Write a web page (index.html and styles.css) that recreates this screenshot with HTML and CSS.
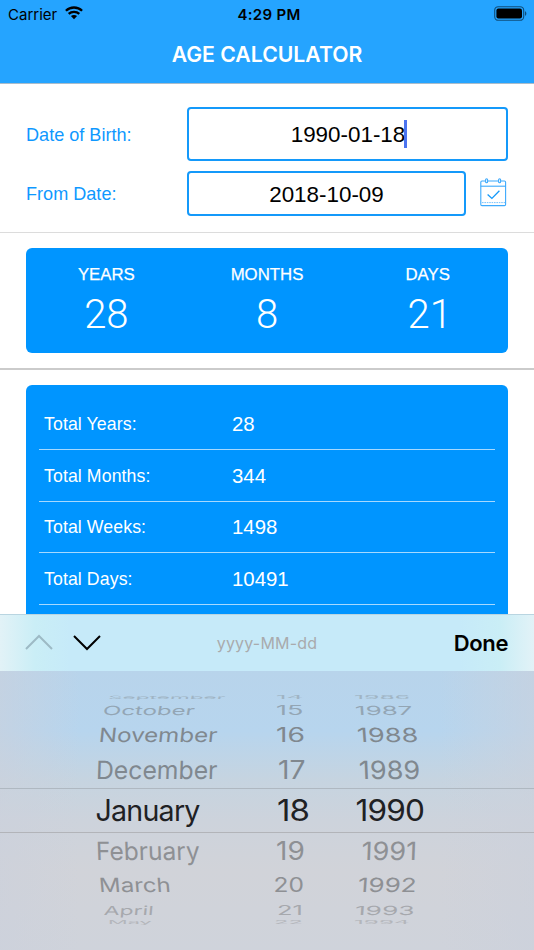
FILE: index.html
```html
<!DOCTYPE html>
<html lang="en">
<head>
    <meta charset="UTF-8">
    <meta name="viewport" content="width=device-width, initial-scale=1.0">
    <title>Age Calculator</title>
    <link rel="stylesheet" href="styles.css">
</head>
<body>
    <header class="header">
        <div class="status-bar">
            <div class="carrier">
                <span>Carrier</span>
                <svg width="18" height="14" viewBox="0 0 18 14" fill="none" stroke="#000" stroke-width="2.3">
                    <path d="M0.9 4.8C5.4 0.4 12.6 0.4 17.1 4.8"/>
                    <path d="M3.7 7.9C6.6 5.1 11.4 5.1 14.3 7.9"/>
                    <path d="M9 13.2L5.9 10.1C7.6 8.5 10.4 8.5 12.1 10.1Z" fill="#000" stroke="none"/>
                </svg>
            </div>
            <span class="time">4:29 PM</span>
            <svg class="battery" width="34" height="16" viewBox="0 0 34 16">
                <rect x="0.7" y="0.7" width="29" height="13.6" rx="3.6" fill="none" stroke="#0f4e7c" stroke-width="1.1"/>
                <rect x="2.4" y="2.4" width="25.6" height="10.2" rx="2" fill="#000"/>
                <path d="M31 5.2C32.8 5.8 32.8 9.2 31 9.8Z" fill="#0f4e7c"/>
            </svg>
        </div>
        <h1>AGE CALCULATOR</h1>
    </header>

    <form class="date-form">
        <div class="field">
            <label>Date of Birth:</label>
            <div class="date-input tall">1990-01-18<span class="caret"></span></div>
        </div>
        <div class="field">
            <label>From Date:</label>
            <div class="date-input">2018-10-09</div>
            <svg class="calendar" width="27" height="29" viewBox="0 0 27 29" fill="none" stroke="#3daafd" stroke-width="1.1">
                <rect x="0.8" y="3" width="24.8" height="24.6" rx="1.2"/>
                <path d="M0.8 8.2H25.6"/>
                <path d="M2 24.6H25" stroke-dasharray="1.6 0.8" stroke-width="0.7"/>
                <rect x="5.6" y="0.8" width="2" height="4" rx="1" fill="#fff"/>
                <rect x="18.6" y="0.8" width="2" height="4" rx="1" fill="#fff"/>
                <path d="M7.6 16.4L11.9 20.4L19.4 12.8" stroke="#1499fa" stroke-width="1.3"/>
            </svg>
        </div>
    </form>

    <section class="summary">
        <div class="card age">
            <div class="age-item"><h2>YEARS</h2><p>28</p></div>
            <div class="age-item"><h2>MONTHS</h2><p>8</p></div>
            <div class="age-item"><h2>DAYS</h2><p>21</p></div>
        </div>
    </section>

    <section class="totals">
        <div class="card totals-card">
            <div class="total"><span>Total Years:</span><b>28</b></div>
            <div class="total"><span>Total Months:</span><b>344</b></div>
            <div class="total"><span>Total Weeks:</span><b>1498</b></div>
            <div class="total"><span>Total Days:</span><b>10491</b></div>
        </div>
    </section>

    <div class="keyboard">
        <div class="toolbar">
            <div class="arrows">
                <svg width="28" height="17" viewBox="0 0 28 17" fill="none" stroke="#9dbac5" stroke-width="2"><path d="M1 15L14 2L27 15"/></svg>
                <svg width="28" height="17" viewBox="0 0 28 17" fill="none" stroke="#000" stroke-width="2"><path d="M1 2L14 15L27 2"/></svg>
            </div>
            <span class="placeholder">yyyy-MM-dd</span>
            <span class="done">Done</span>
        </div>
        <div class="picker">
            <div class="row up4"><span>September</span><span>14</span><span>1986</span></div>
            <div class="row up3"><span>October</span><span>15</span><span>1987</span></div>
            <div class="row up2"><span>November</span><span>16</span><span>1988</span></div>
            <div class="row up1"><span>December</span><span>17</span><span>1989</span></div>
            <div class="row selected"><span>January</span><span>18</span><span>1990</span></div>
            <div class="row down1"><span>February</span><span>19</span><span>1991</span></div>
            <div class="row down2"><span>March</span><span>20</span><span>1992</span></div>
            <div class="row down3"><span>April</span><span>21</span><span>1993</span></div>
            <div class="row down4"><span>May</span><span>22</span><span>1994</span></div>
        </div>
    </div>
</body>
</html>
```
FILE: styles.css
```css
* {
    box-sizing: border-box;
}

body {
    margin: 0;
    height: 950px;
    overflow: hidden;
    display: flex;
    flex-direction: column;
    background-color: #fff;
    font-family: "Liberation Sans", Arial, sans-serif;
}

h1, h2, p {
    margin: 0;
}

svg {
    display: block;
}

.header {
    height: 84px;
    flex: none;
    background-color: #25a4ff;
    border-bottom: 1px solid #a9bccb;
    font-family: Inter, sans-serif;
}

.status-bar {
    height: 28px;
    padding: 0 7px 0 8px;
    display: grid;
    grid-template-columns: 1fr auto 1fr;
    align-items: center;
    font-size: 15px;
}

.carrier {
    display: flex;
    align-items: center;
    gap: 8px;
}

.carrier svg {
    margin-top: -2px;
}

.time {
    padding-left: 3px;
    font-weight: 600;
    letter-spacing: 0.3px;
}

.battery {
    justify-self: end;
    margin-right: -1px;
}

.header h1 {
    color: #fff;
    font-size: 21.2px;
    font-weight: 600;
    line-height: 53px;
    text-align: center;
}

.date-form {
    height: 149px;
    flex: none;
    padding: 23px 26px 0;
    border-bottom: 1px solid #dcdcdc;
}

.field {
    display: flex;
    align-items: center;
    margin-bottom: 10px;
}

.field label {
    width: 161px;
    padding-top: 2px;
    color: #0f98ff;
    font-size: 18.1px;
}

.date-input {
    width: 279px;
    height: 45px;
    padding-top: 2px;
    display: flex;
    align-items: center;
    justify-content: center;
    border: 2px solid #1499fa;
    border-radius: 4px;
    font-size: 22.4px;
}

.date-input.tall {
    width: 321px;
    height: 54px;
}

.caret {
    width: 3px;
    height: 28px;
    margin: -3px -3px 0 -1px;
    background-color: #4b74f0;
}

.calendar {
    margin: -2px 0 0 14px;
}

.summary {
    height: 137px;
    flex: none;
    padding: 15px 26px 0;
    border-bottom: 2px solid #cbcbcb;
}

.card {
    background-color: #0095ff;
    border-radius: 6px;
    color: #fff;
}

.age {
    height: 105px;
    display: grid;
    grid-template-columns: repeat(3, 1fr);
    padding-top: 16px;
    text-align: center;
}

.age-item h2 {
    font-size: 16.8px;
    font-weight: normal;
    line-height: 21px;
    -webkit-text-stroke: 0.25px #fff;
}

.age-item p {
    font-family: Roboto, sans-serif;
    font-size: 40px;
    font-weight: 300;
    line-height: 60px;
}

.age-item:last-child p {
    padding-left: 4px;
}

.totals {
    flex: 1;
    min-height: 0;
    padding: 15px 26px 0;
}

.totals-card {
    height: 300px;
    padding: 13.4px 13px 0;
}

.total {
    height: 51.6px;
    display: flex;
    align-items: center;
    padding: 2px 0 0 5px;
    border-bottom: 1px solid #a6d9ff;
    font-size: 17.7px;
    letter-spacing: 0.1px;
}

.total span {
    width: 188px;
}

.total b {
    font-size: 20.4px;
    font-weight: normal;
    letter-spacing: 0;
}

.keyboard {
    height: 336px;
    flex: none;
    font-family: Inter, sans-serif;
}

.toolbar {
    height: 57px;
    padding: 0 26px;
    display: grid;
    grid-template-columns: 1fr auto 1fr;
    align-items: center;
    border-top: 1px solid #b9d5e1;
    background: linear-gradient(to right, #e2f2f7, #caeef6 35px, #c6eaf9 70px, #c6eaf9 460px, #caeef6 500px, #e2f2f7);
}

.arrows {
    display: flex;
    gap: 20px;
    margin: -2px 0 0 -1px;
}

.placeholder {
    color: #a9abad;
    font-size: 16px;
    letter-spacing: 0.2px;
}

.done {
    justify-self: end;
    font-size: 22px;
    font-weight: 600;
    letter-spacing: -0.4px;
}

.picker {
    height: 279px;
    padding-top: 22px;
    background:
        linear-gradient(to right, rgba(204, 209, 220, 0.6), rgba(204, 209, 220, 0) 80px, rgba(204, 209, 220, 0) 440px, rgba(204, 209, 220, 0.6)),
        linear-gradient(#b8d4eb, #b7d5ee 60px, #c6d4e0 110px, #cdd3dc 150px, #d1d3d9 200px, #cfd3db);
}

/* each row is one face of the wheel, squashed more the further it turns away */
.row {
    display: flex;
    align-items: center;
    font-size: 25px;
    line-height: 1;
    color: #80888f;
}

.row span {
    flex: none;
    white-space: nowrap;
    transform-origin: left center;
    transform: translateX(var(--x, 0)) scale(var(--sx, 1), var(--sy, 1)) skewX(var(--skew, 0deg));
}

.row span:nth-child(1) {
    width: 180px;
    margin-left: 97px;
}

.row span:nth-child(2) {
    width: 82px;
}

.selected {
    height: 45px;
    border-top: 1px solid #afb8c1;
    border-bottom: 1px solid #b2b4b9;
    color: #1f2124;
    font-size: 29.5px;
    letter-spacing: -0.8px;
}

.up1, .down1 {
    height: 36px;
}

.up2, .down2 {
    height: 33px;
    --sy: 0.78;
}

.up3, .down3 {
    height: 17px;
    --sy: 0.5;
}

.up4, .down4 {
    height: 9px;
    --sy: 0.18;
}

.up3 { color: #93a5b4; }
.up4 { color: #a0b4c4; }
.down1, .down2 { color: #8e9094; }
.down3 { color: #a6a8ad; }
.down4 { height: 7px; color: #b4b6bb; }

/* months lean one way, years the other, days sit near the middle */
.up4 span:nth-child(1) { --x: 11px; --sx: 0.905; --skew: -2deg; }
.up3 span:nth-child(1) { --x: 6px; --sx: 0.96; --skew: -5deg; }
.up2 span:nth-child(1) { --x: 2px; --sx: 0.965; --skew: -5deg; }
.up1 span:nth-child(1) { --x: -1px; --sx: 0.99; --skew: -2deg; }
.selected span:nth-child(1) { --x: -1.5px; --sx: 0.97; }
.down1 span:nth-child(1) { --x: -1px; --sx: 0.98; --skew: 2deg; }
.down2 span:nth-child(1) { --x: 2px; --sx: 0.96; --skew: 4deg; }
.down3 span:nth-child(1) { --x: 7px; --sx: 0.91; --skew: -3deg; }
.down4 span:nth-child(1) { --x: 11px; --sx: 0.87; }

.up4 span:nth-child(2) { --x: -1px; --sx: 1.04; }
.up3 span:nth-child(2) { --x: -1px; --sx: 1.08; }
.up2 span:nth-child(2) { --x: -1px; --sx: 1.13; }
.up1 span:nth-child(2) { --x: 1px; --sx: 1.13; }
.selected span:nth-child(2) { --sx: 1.12; }
.down1 span:nth-child(2) { --x: -1px; --sx: 1.12; }
.down2 span:nth-child(2) { --x: -3.5px; --sx: 0.98; }
.down3 span:nth-child(2) { --sx: 1.02; }
.down4 span:nth-child(2) { --x: -3px; --sx: 0.95; }

.up4 span:nth-child(3) { --x: -5px; --sx: 0.99; }
.up3 span:nth-child(3) { --x: -4px; --sx: 1.04; --skew: 2deg; }
.up2 span:nth-child(3) { --x: -2px; --sx: 1.08; --skew: 3deg; }
.up1 span:nth-child(3) { --sx: 1.08; --skew: 2deg; }
.selected span:nth-child(3) { --x: -3.5px; --sx: 1.07; }
.down1 span:nth-child(3) { --x: 2.5px; --sx: 1.08; --skew: -2deg; }
.down2 span:nth-child(3) { --x: -1px; --sx: 1.04; --skew: -3deg; }
.down3 span:nth-child(3) { --x: -4px; --sx: 1.05; --skew: -2deg; }
.down4 span:nth-child(3) { --x: -5px; --sx: 0.97; }
```
